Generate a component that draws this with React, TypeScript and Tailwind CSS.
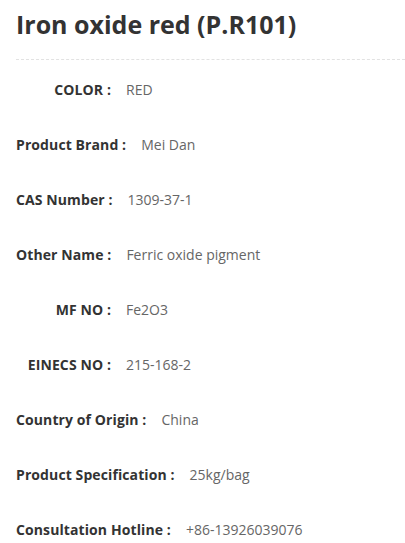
const specs: { label: string; value: string }[] = [
  { label: "COLOR :", value: "RED" },
  { label: "Product Brand :", value: "Mei Dan" },
  { label: "CAS Number :", value: "1309-37-1" },
  { label: "Other Name :", value: "Ferric oxide pigment" },
  { label: "MF NO :", value: "Fe2O3" },
  { label: "EINECS NO :", value: "215-168-2" },
  { label: "Country of Origin :", value: "China" },
  { label: "Product Specification :", value: "25kg/bag" },
  { label: "Consultation Hotline :", value: "+86-13926039076" },
];

export default function App() {
  return (
    <div className="min-h-[543px] bg-white pl-4 text-[#333] font-['Open_Sans','Noto_Sans',sans-serif]">
      {/* Title */}
      <h1 className="border-b border-dashed border-[#e2e2e2] pt-[8px] pb-[19px] text-[25px] leading-[32px] font-bold text-[#333]">
        Iron oxide red (P.R101)
      </h1>

      {/* Spec rows */}
      <div className="pt-[2px]">
        {specs.map((s) => (
          <div key={s.label} className="flex h-[55px] items-center text-[14px]">
            <span className="inline-block min-w-[95px] text-right font-bold text-[#333] whitespace-nowrap tracking-[0.1px]">
              {s.label}
            </span>
            <span className="ml-[15px] text-[#666] whitespace-nowrap">{s.value}</span>
          </div>
        ))}
      </div>
    </div>
  );
}
